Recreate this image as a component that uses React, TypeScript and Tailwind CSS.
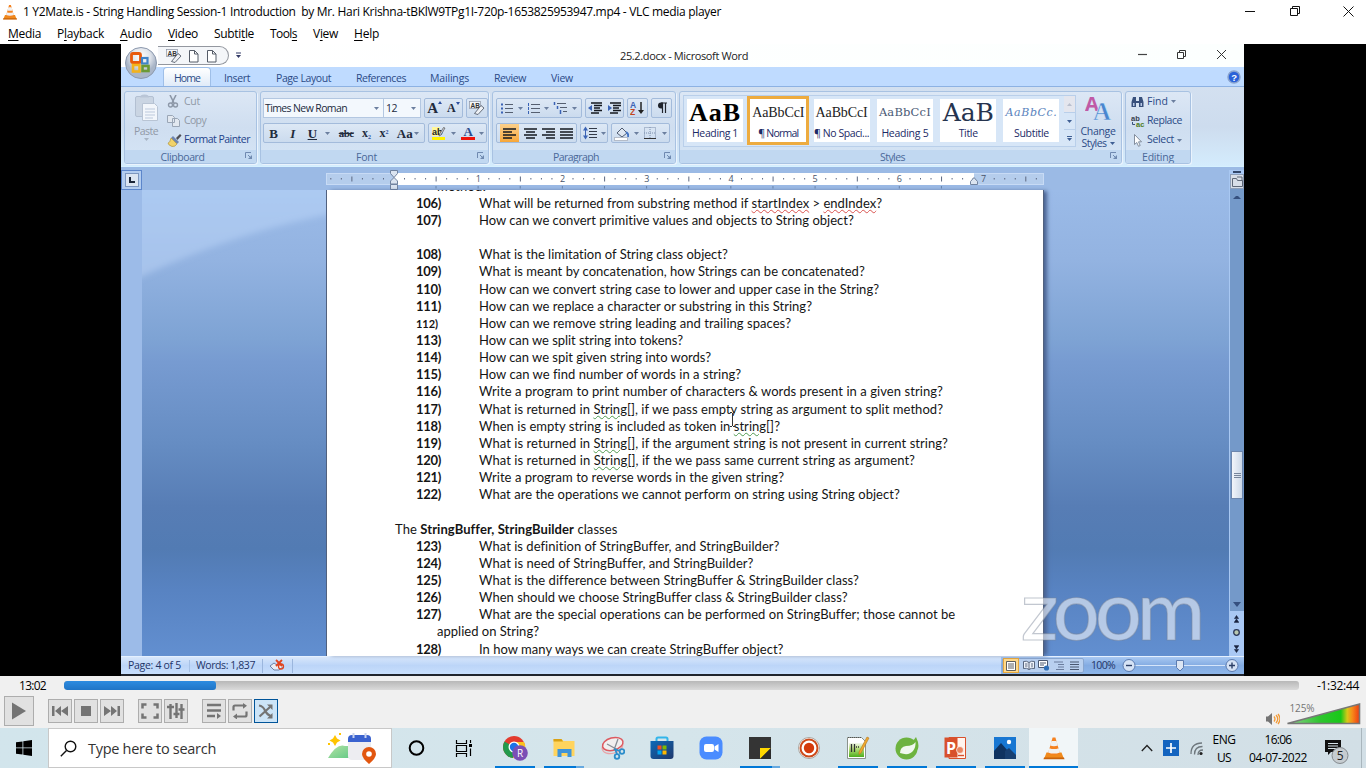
import { useLayoutEffect, useRef, useState, type ReactNode } from "react";

/* Text run spread over a known width by adjusting its letter spacing. */
function Fit({ w, className = "", children }: { w: number; className?: string; children: ReactNode }) {
  const ref = useRef<HTMLSpanElement>(null);
  const [ls, setLs] = useState(0);
  useLayoutEffect(() => {
    const el = ref.current;
    if (!el) return;
    const count = (el.textContent || "").length || 1;
    setLs((w - el.getBoundingClientRect().width) / count);
  }, [w]);
  return (
    <span ref={ref} className={`inline-block shrink-0 whitespace-pre ${className}`} style={{ letterSpacing: `${ls}px` }}>
      {children}
    </span>
  );
}

function Svg({ w, h, className = "", children }: { w: number; h: number; className?: string; children: ReactNode }) {
  return (
    <svg width={w} height={h} viewBox={`0 0 ${w} ${h}`} fill="none" className={`shrink-0 ${className}`}>
      {children}
    </svg>
  );
}

function Cone({ s }: { s: number }) {
  return (
    <svg width={s} height={s} viewBox="0 0 24 24" className="shrink-0">
      <path d="M4.500 16.500h15l2.500 6.500h-20z" fill="#f08a1c" />
      <path d="M2 21.500h20l.5 1.700h-21z" fill="#c9620a" />
      <path d="M10.600 1.500h2.800L18 17.500q-6 3-12 0z" fill="#f58220" />
      <path d="M9.500 5h5l1.400 4.600q-3.900 1.400-7.800 0zM7.300 12.200q4.700 1.800 9.400 0l1.200 4.200q-5.900 2.400-11.800 0z" fill="#f1f1f1" />
    </svg>
  );
}

/* ---------------- player chrome ---------------- */

const menus: [string, string, string, number, string][] = [
  ["", "M", "edia", 33, "mr-4"],
  ["P", "l", "ayback", 47, "mr-4"],
  ["", "A", "udio", 32, "mr-4"],
  ["", "V", "ideo", 30, "mr-4"],
  ["Subti", "t", "le", 40, "mr-4"],
  ["Tool", "s", "", 27, "mr-4"],
  ["V", "i", "ew", 25, "mr-4"],
  ["", "H", "elp", 25, ""],
];

function TitleBar() {
  return (
    <div className="flex h-6 items-center bg-white pl-0.5 text-black">
      <Cone s={16} />
      <Fit w={698} className="ml-[5px] text-[12px] leading-6">
        {"1 Y2Mate.is - String Handling Session-1 Introduction  by Mr. Hari Krishna-tBKlW9TPg1I-720p-1653825953947.mp4 - VLC media player"}
      </Fit>
      <Svg w={121} h={22} className="-mt-[3px] ml-auto">
        <path d="M0 11.500h10M98.500 6.500l10 10M108.500 6.500l-10 10" stroke="#111" />
        <path d="M45.500 8.500h7v7h-7zM47.500 8.500v-2h7v7h-2" stroke="#111" />
      </Svg>
    </div>
  );
}

function MenuBar() {
  return (
    <div className="flex h-5 items-center bg-white pl-2 text-[12px] text-black">
      {menus.map(([a, u, b, w, m]) => (
        <Fit key={a + u + b} w={w} className={`${m} leading-5`}>
          {a}
          <span className="underline underline-offset-2">{u}</span>
          {b}
        </Fit>
      ))}
    </div>
  );
}

const ctl = "flex size-6 items-center justify-center border border-[#adadad] bg-[#e1e1e1]";

function Controls() {
  return (
    <div className="flex h-[52px] flex-col bg-[#f0f0f0] text-black">
      <div className="flex h-[19px] items-center">
        <Fit w={27} className="ml-[19px] text-[12px] leading-[19px]">13:02</Fit>
        <div className="ml-[18px] h-[9px] w-[1235px] overflow-hidden rounded-[3px] bg-linear-to-b from-[#b8b8b8] to-[#dadada]">
          <div className="h-full w-[152px] rounded-[3px] bg-linear-to-b from-[#2d8be0] to-[#2075c6]" />
        </div>
        <Fit w={42} className="ml-[18px] text-[12px] leading-[19px]">-1:32:44</Fit>
      </div>
      <div className="flex h-[33px] items-center pb-px pl-1">
        <div className="flex size-[30px] items-center justify-center border border-[#adadad] bg-[#e1e1e1]">
          <Svg w={16} h={18}><path d="M1 .5l14 8.500-14 8.500z" fill="#747474" /></Svg>
        </div>
        <div className="ml-3.5 flex gap-0.5">
          <div className={ctl}><Svg w={16} h={12}><path d="M0 1h2.500v10H0zM9 1v10L3 6zM16 1v10l-7-5z" fill="#747474" /></Svg></div>
          <div className={ctl}><div className="size-2.5 bg-[#747474]" /></div>
          <div className={ctl}><Svg w={16} h={12}><path d="M13.500 1H16v10h-2.500zM7 1v10l6-5zM0 1v10l7-5z" fill="#747474" /></Svg></div>
        </div>
        <div className="ml-3.5 flex gap-0.5">
          <div className={ctl}><Svg w={18} h={16}><path d="M1.500 5.500v-4h4M12.500 1.500h4v4M16.500 10.500v4h-4M5.500 14.500h-4v-4" stroke="#747474" strokeWidth="2.500" /></Svg></div>
          <div className={ctl}><Svg w={18} h={16}><path d="M3.500 1v15M9.500 0v15M14.500 1v15" stroke="#747474" strokeWidth="2.400" /><path d="M0 4h7M6.500 11h6M11.500 6.500h6" stroke="#747474" strokeWidth="2.400" /></Svg></div>
        </div>
        <div className="ml-3.5 flex gap-0.5">
          <div className={ctl}><Svg w={16} h={16}><path d="M1 2h14M1 7.500h14M1 13h8" stroke="#747474" strokeWidth="2.400" /><path d="M11 10v6l4-3z" fill="#747474" /></Svg></div>
          <div className={ctl}><Svg w={16} h={16}><path d="M1.500 7.500V4q0-1.500 1.500-1.500h9M14.500 8.500V12q0 1.500-1.500 1.500H4" stroke="#747474" strokeWidth="2.200" /><path d="M11 0l4 2.700-4 3zM5 10.500v6l-4-3z" fill="#747474" /></Svg></div>
          <div className="flex size-6 items-center justify-center border border-[#005499] bg-[#cce4f7]">
            <Svg w={16} h={16}><path d="M1 2.500q4 .5 6 5t7 6M1.500 13.500L12 4" stroke="#747474" strokeWidth="2.200" /><path d="M9 1.500h5.500V7zM14.500 10v5.500H9z" fill="#747474" /></Svg>
          </div>
        </div>
        <Svg w={14} h={14} className="mt-4 mr-[6px] ml-auto"><path d="M0 4.500h2L6 1v12L2 9.500H0z" fill="#747474" /><path d="M8 4.500q2 2.500 0 5M10 3q3.500 4 0 8M12 2q4 5 0 10" stroke="#f39a35" strokeWidth="1.300" /></Svg>
        <svg width="75" height="26" viewBox="0 0 75 26" className="mr-[5px] mt-1 shrink-0">
          <defs>
            <linearGradient id="vol"><stop offset="0" stopColor="#8fd08f" /><stop offset=".45" stopColor="#2fc52f" /><stop offset=".74" stopColor="#18c818" /><stop offset=".83" stopColor="#d8c818" /><stop offset=".9" stopColor="#f68a1a" /><stop offset="1" stopColor="#ee3a12" /></linearGradient>
          </defs>
          <path d="M1.500 23.500L73.500 4v19.500z" fill="url(#vol)" stroke="#777" strokeWidth="1.600" />
          <text x="3.500" y="12" fontSize="10" textLength="25" fill="#747474" fontFamily="Open Sans, sans-serif">125%</text>
        </svg>
      </div>
    </div>
  );
}

/* ---------------- word ribbon ---------------- */

const tabs: [string, number, number][] = [
  ["Insert", 26, 225], ["Page Layout", 55, 277], ["References", 50, 357], ["Mailings", 39, 431], ["Review", 32, 495], ["View", 22, 552],
];

function Logo() {
  return (
    <Svg w={34} h={34}>
      <defs>
        <radialGradient id="orb" cx=".5" cy=".3"><stop offset="0" stopColor="#fff" /><stop offset=".6" stopColor="#dfe3ea" /><stop offset="1" stopColor="#aab6c8" /></radialGradient>
      </defs>
      <circle cx="17" cy="17" r="15.500" fill="url(#orb)" stroke="#8c99ae" />
      <rect x="7.500" y="7.500" width="9" height="9" rx="1.500" stroke="#e8590c" strokeWidth="2.800" />
      <rect x="18" y="12" width="5.500" height="5.500" stroke="#3f83c9" strokeWidth="2.200" />
      <rect x="9" y="19" width="6.500" height="6.500" stroke="#f3b21b" strokeWidth="2.600" />
      <rect x="18.500" y="20" width="6" height="5" stroke="#6b9a35" strokeWidth="2.600" />
    </Svg>
  );
}

function ClearIcon() {
  return (
    <Svg w={16} h={16}>
      <rect x=".5" y="1.500" width="11" height="7" fill="#f4f6f9" stroke="#8a93a3" strokeWidth=".7" />
      <text x="1.500" y="8" fontSize="6.500" fontWeight="700" fill="#333" fontFamily="Liberation Sans, sans-serif">AB</text>
      <path d="M12 5.500l3 2.500-6 6.500-3.500-1z" fill="#eef1f5" stroke="#59616e" strokeWidth=".9" />
    </Svg>
  );
}

function DocIcon() {
  return <Svg w={13} h={14}><path d="M2.500 1.500h5l3.500 3.500v8h-8.500z" fill="#fff" stroke="#555c68" /><path d="M7.500 1.500V5H11" stroke="#555c68" /></Svg>;
}

function WordTop() {
  return (
    <div className="relative h-[43px] shrink-0">
      <div className="flex h-[23px] items-center bg-linear-to-r from-white to-[#fcfffe]">
        <div className="ml-[37px] flex h-[19px] w-[71px] items-center gap-[5px] rounded-r-full border border-l-0 border-[#93979f] bg-[#f4f6f9] pl-2">
          <ClearIcon />
          <DocIcon />
          <DocIcon />
        </div>
        <Svg w={7} h={7} className="ml-[6px]"><path d="M1 1h5" stroke="#333a66" /><path d="M1 3h5L3.500 6z" fill="#333a66" /></Svg>
        <Fit w={128} className="ml-[378px] pt-0.5 text-[11px] text-[#222]">25.2.docx - Microsoft Word</Fit>
        <Svg w={98} h={14} className="-mt-[3px] mr-[18px] ml-auto">
          <path d="M10 7.500h9" stroke="#444" strokeWidth="1.200" />
          <path d="M49.500 5.500h6v6h-6zM51.500 5.500v-2h6v6h-2M89 3l9 9M98 3l-9 9" stroke="#333" />
        </Svg>
      </div>
      <div className="relative flex h-5 items-end border-b border-[#8db2e3] bg-[#bfdbff] text-[10.5px] text-[#2b4a86]">
        <div className="ml-[42px] flex h-[19px] w-[48px] items-center justify-center rounded-t border border-b-0 border-[#9fbfe8] bg-linear-to-b from-white to-[#e0ebf8] pt-[3px]">
          <Fit w={26}>Home</Fit>
        </div>
        {tabs.map(([t, w, x]) => (
          <div key={t} className="absolute top-[4px]" style={{ left: x - 122 }}>
            <Fit w={w}>{t}</Fit>
          </div>
        ))}
        <Svg w={14} h={14} className="mr-[3px] mb-[2px] ml-auto">
          <circle cx="7" cy="7" r="6" fill="#2b62d9" stroke="#8aa4cf" strokeWidth="1.500" />
          <text x="4.200" y="10.500" fontSize="9.500" fontWeight="700" fill="#fff" fontFamily="Liberation Sans, sans-serif">?</text>
        </Svg>
      </div>
      <div className="absolute top-[2px] left-[3px]"><Logo /></div>
    </div>
  );
}

function Group({ label, w, className, corner = true, children }: { label: string; w: number; className: string; corner?: boolean; children: ReactNode }) {
  return (
    <div className={`flex h-[73px] shrink-0 flex-col overflow-hidden rounded-[3px] border border-[#a8c2e2] bg-linear-to-b from-[#dce7f5] via-[#cfdef0] to-[#d5e5f6] shadow-[1px_1px_0_#eaf3fd] ${className}`}>
      <div className="h-[58px] shrink-0">{children}</div>
      <div className={`relative flex h-[13px] items-center justify-center bg-[#c1d8f1] pt-px text-[10.5px] leading-[13px] text-[#4a6899] ${corner ? "pr-[16px]" : ""}`}>
        <Fit w={w}>{label}</Fit>
        {corner && (
          <Svg w={8} h={8} className="absolute top-0.5 right-[3px]"><path d="M.5 6V.5H6M3 3l3 3" stroke="#6f89b0" /><path d="M7 3v4H3z" fill="#6f89b0" /></Svg>
        )}
      </div>
    </div>
  );
}

function Down({ c = "#6b7f9f" }: { c?: string }) {
  return <Svg w={5} h={3}><path d="M0 0h5L2.500 3z" fill={c} /></Svg>;
}

const box = "flex h-[20px] items-center justify-around rounded-[2px] border border-[#a3bbdb] bg-linear-to-b from-[#dde8f5] to-[#cbdbee]";

function Clipboard() {
  return (
    <Group label="Clipboard" w={44} className="ml-[3px] w-[133px]">
      <div className="flex text-[10.5px] text-[#9099a6]">
        <div className="flex w-[42px] flex-col items-center pt-px leading-[13px]">
          <Svg w={27} h={28}>
            <rect x="2.500" y="3.500" width="18" height="20" rx="1.500" fill="#cad5e3" stroke="#b3c0d2" />
            <path d="M7 4.500q0-3 4.500-3t4.500 3z" fill="#b9c5d6" />
            <path d="M9.500 10.500h12l3 3v14h-15z" fill="#f2f6fb" stroke="#b8c4d4" />
            <path d="M12 16h10M12 19h10M12 22h10M12 25h8" stroke="#bcc9dc" />
          </Svg>
          <Fit w={24} className="mt-1">Paste</Fit>
          <Down c="#a8b4c4" />
        </div>
        <div className="flex flex-col">
          <div className="flex h-[19px] items-center gap-[4px]">
            <Svg w={13} h={13}><path d="M3 0l4 8M9 0L5 8" stroke="#8d98a8" strokeWidth="1.600" /><circle cx="3.500" cy="10" r="2" stroke="#8d98a8" strokeWidth="1.400" /><circle cx="8.500" cy="10" r="2" stroke="#8d98a8" strokeWidth="1.400" /></Svg>
            <Fit w={16}>Cut</Fit>
          </div>
          <div className="flex h-[19px] items-center gap-[4px]">
            <Svg w={13} h={12}><path d="M.5.5h5l2 2v5h-7zM5.500 3.500h5l2 2v6h-7z" fill="#e2e8f0" stroke="#9aa6b6" /></Svg>
            <Fit w={22}>Copy</Fit>
          </div>
          <div className="flex h-[19px] items-center gap-[2px] text-[#24428a]">
            <Svg w={15} h={14}><path d="M9 5l4-4 1.500 1.500-4 4.500z" fill="#4d4d55" /><path d="M6 3l6 6-2 2-6-6z" fill="#6f86b2" /><path d="M4 5l6 6q-2 3-5 2.500Q1 12 1 10q2 0 3-5z" fill="#f1d36b" stroke="#a88a30" strokeWidth=".6" /></Svg>
            <Fit w={66}>Format Painter</Fit>
          </div>
        </div>
      </div>
    </Group>
  );
}

function FontGroup() {
  return (
    <Group label="Font" w={21} className="ml-[3px] w-[229px]">
      <div className="flex flex-col gap-[5px] pt-[6px] pl-0.5 font-['Liberation_Serif',serif] text-[#222b3d]">
        <div className="flex">
          <div className="flex h-[20px] w-[121px] items-center justify-between border border-[#b3c7e1] bg-[#f3f8fd] pr-1 pl-px font-['Open_Sans',sans-serif] text-[10.5px]">
            <Fit w={82} className="pt-px">Times New Roman</Fit><Down />
          </div>
          <div className="flex h-[20px] w-[37px] items-center justify-between border border-l-0 border-[#b3c7e1] bg-[#f3f8fd] pr-1 pl-[2px] font-['Open_Sans',sans-serif] text-[10.5px]">
            <Fit w={11} className="pt-px">12</Fit><Down />
          </div>
          <div className={`${box} ml-[3px] w-[39px] font-bold`}>
            <span className="flex text-[15px] leading-none">A<Svg w={4} h={3}><path d="M0 3h4L2 0z" fill="#2b4fa0" /></Svg></span>
            <span className="flex text-[12px] leading-none">A<Svg w={4} h={3}><path d="M0 0h4L2 3z" fill="#2b4fa0" /></Svg></span>
          </div>
          <div className={`${box} ml-[3px] w-[22px]`}><ClearIcon /></div>
        </div>
        <div className="flex text-[13px] leading-none font-bold">
          <div className={`${box} w-[162px] px-px`}>
            <span>B</span>
            <span className="ml-1 italic">I</span>
            <span className="ml-1 underline">U</span>
            <Down />
            <Fit w={15} className="text-[11px] line-through">abc</Fit>
            <span className="text-[12px]">x<sub className="text-[6px] text-[#2b4fa0]">2</sub></span>
            <span className="text-[12px]">x<sup className="text-[6px] text-[#2b4fa0]">2</sup></span>
            <span className="flex items-center gap-px">Aa<Down /></span>
          </div>
          <div className={`${box} ml-[3px] w-[59px]`}>
            <Svg w={16} h={16}><rect x="1" y="12" width="13" height="3" fill="#fff200" /><rect x="1" y="2" width="8" height="9" fill="#fff79a" /><text x="1" y="9.500" fontSize="9" fontWeight="700" fill="#222" fontFamily="Liberation Sans, sans-serif">ab</text><path d="M14 3l-4 7-2 1 .5-2 4-6.500z" fill="#c9ccd4" stroke="#444" strokeWidth=".6" /></Svg>
            <Down />
            <Svg w={14} h={16}><rect x="0" y="12" width="14" height="3" fill="#f0140a" /><text x="2.500" y="11" fontSize="13" fontWeight="700" fill="#2c4c8c" fontFamily="Liberation Serif, serif">A</text></Svg>
            <Down />
          </div>
        </div>
      </div>
    </Group>
  );
}

function Lines({ d, c = "#15181f" }: { d: string; c?: string }) {
  return <Svg w={13} h={11}><path d={d} stroke={c} strokeWidth="1.400" /></Svg>;
}

function Paragraph() {
  return (
    <Group label="Paragraph" w={46} className="ml-[3px] w-[184px]">
      <div className="flex flex-col gap-[5px] pt-[6px] pl-[3px]">
        <div className="flex">
          <div className={`${box} w-[86px] gap-[2px] px-[3px]`}>
            <Svg w={13} h={11}><path d="M4 1.500h8M4 5.500h8M4 9.500h8" stroke="#555f70" /><path d="M0 1.500h2M0 5.500h2M0 9.500h2" stroke="#3a63b5" strokeWidth="2" /></Svg>
            <Down />
            <Svg w={13} h={11}><path d="M4 1.500h9M4 5.500h9M4 9.500h9" stroke="#555f70" /><path d="M1.500 0v3M1.500 4v3M1.500 8v3" stroke="#3a63b5" /></Svg>
            <Down />
            <Svg w={15} h={13}><path d="M4 1.500h9M7 5.500h7M10 9.500h4" stroke="#555f70" /><path d="M1.500 0v3M4.500 4v3M7.500 8v4" stroke="#3a63b5" strokeWidth="1.500" /></Svg>
            <Down />
          </div>
          <div className={`${box} ml-[3px] w-[39px]`}>
            <Svg w={14} h={12}><path d="M3 1h11M6 3.500h8M6 6h6M6 8.500h8M3 11h8" stroke="#15181f" strokeWidth="1.300" /><path d="M4 3L0 6l4 3z" fill="#3a63b5" /></Svg>
            <Svg w={14} h={12}><path d="M3 1h11M6 3.500h8M6 6h6M6 8.500h8M3 11h8" stroke="#15181f" strokeWidth="1.300" /><path d="M1 3l4 3-4 3z" fill="#3a63b5" /></Svg>
          </div>
          <div className={`${box} ml-[3px] w-[21px]`}>
            <Svg w={15} h={16}><text x="0" y="7.500" fontSize="8.500" fontWeight="700" fill="#3a63b5" fontFamily="Liberation Sans, sans-serif">A</text><text x="0" y="15" fontSize="8.500" fontWeight="700" fill="#c1441e" fontFamily="Liberation Sans, sans-serif">Z</text><path d="M11 2v10" stroke="#222" strokeWidth="1.500" /><path d="M8 10h6l-3 4z" fill="#222" /></Svg>
          </div>
          <div className={`${box} ml-[3px] w-[21px]`}>
            <Svg w={10} h={12}><path d="M4 1h6M5.500 1v10M8.500 1v10" stroke="#20242c" strokeWidth="1.200" /><path d="M6 .5H4a3 3 0 000 6h2z" fill="#20242c" /></Svg>
          </div>
        </div>
        <div className="flex">
          <div className={`${box} w-[81px] overflow-hidden`}>
            <div className="flex h-full w-[19px] items-center justify-center bg-linear-to-b from-[#fbd08a] to-[#f7a738]"><Lines d="M0 1h13M0 4h9M0 7h13M0 10h9" /></div>
            <Lines d="M0 1h13M2 4h9M0 7h13M2 10h9" />
            <Lines d="M0 1h13M4 4h9M0 7h13M4 10h9" />
            <Lines d="M0 1h13M0 4h13M0 7h13M0 10h13" />
          </div>
          <div className={`${box} ml-[3px] w-[28px]`}>
            <Svg w={15} h={14}><path d="M6 2.500h8M6 5.500h8M6 8.500h8M6 11.500h8" stroke="#333a48" strokeWidth="1.200" /><path d="M2.500 2v10" stroke="#3a63b5" /><path d="M0 4.500L2.500.5 5 4.500zM0 9.500l2.500 4 2.500-4z" fill="#3a63b5" /></Svg>
            <Down />
          </div>
          <div className={`${box} ml-[3px] w-[59px]`}>
            <Svg w={15} h={15}><path d="M3 7l5-5 5 5-5 4z" fill="#dfe7f2" stroke="#4f5b70" /><path d="M12 6q3 2 2 5" stroke="#4474c4" strokeWidth="2" /><rect x=".5" y="11.500" width="13" height="3" fill="#fff" stroke="#b5bcc8" /></Svg>
            <Down />
            <Svg w={13} h={13}><path d="M.5.5h11v11H.5zM6 0v12M0 6h12" stroke="#7d8fad" strokeDasharray="1 1" /><path d="M0 11.500h12" stroke="#333" /></Svg>
            <Down />
          </div>
        </div>
      </div>
    </Group>
  );
}

const serif = "font-['Liberation_Serif','DejaVu_Serif',serif]";
const cards: { s: string; w: number; l: string; lw: number; cls: string; card: string }[] = [
  { s: "AaB", w: 52, l: "Heading 1", lw: 46, cls: `${serif} text-[26px] font-bold text-black`, card: "w-[56px]" },
  { s: "AaBbCcI", w: 52, l: "¶ Normal", lw: 40, cls: `${serif} text-[14px] text-[#222]`, card: "w-[56px] outline-[3px] outline-[#edab3f]" },
  { s: "AaBbCcI", w: 52, l: "¶ No Spaci...", lw: 55, cls: `${serif} text-[14px] text-[#222]`, card: "w-[56px]" },
  { s: "AaBbCcI", w: 52, l: "Heading 5", lw: 47, cls: "font-['DejaVu_Serif',serif] text-[11.5px] text-[#4a5a75]", card: "w-[56px]" },
  { s: "AaB", w: 51, l: "Title", lw: 19, cls: "font-['DejaVu_Serif',serif] text-[25px] text-[#26344e]", card: "w-[56px]" },
  { s: "AaBbCc.", w: 52, l: "Subtitle", lw: 35, cls: "font-['DejaVu_Serif',serif] text-[11px] italic text-[#5a83bd]", card: "w-[56px]" },
];

function Styles() {
  return (
    <Group label="Styles" w={25} className="ml-[3px] w-[443px]">
      <div className="flex">
        <div className="mt-[3px] ml-[3px] flex h-[52px] w-[393px] border border-[#b9cfea] bg-[#d7e6f7] pt-[3px] pl-[3px]">
          <div className="flex gap-[7.3px]">
            {cards.map((c, i) => (
              <div key={i} className={`flex h-[43px] flex-col items-center bg-white ${c.card}`}>
                <div className="flex h-[27px] items-center justify-center leading-none"><Fit w={c.w} className={`${c.cls} leading-none`}>{c.s}</Fit></div>
                <Fit w={c.lw} className="text-[10.5px] leading-[15px] text-[#1b2a66]">{c.l}</Fit>
              </div>
            ))}
          </div>
          <div className="-mt-[3px] ml-[5px] flex w-3 flex-col text-[#5c7699]">
            <div className="flex h-[17px] items-center justify-center border-b border-[#b9cfea] bg-[#e4e6ee]"><Svg w={5} h={3}><path d="M0 3h5L2.500 0z" fill="#b9bfce" /></Svg></div>
            <div className="flex h-[17px] items-center justify-center border-b border-[#b9cfea]"><Down c="#3f5f94" /></div>
            <div className="flex h-[16px] flex-col items-center justify-center gap-px"><div className="h-px w-[5px] bg-[#3f5f94]" /><Down c="#3f5f94" /></div>
          </div>
        </div>
        <div className="ml-[3px] flex w-[38px] flex-col items-center pt-px text-[10.5px] leading-[11.5px] text-[#2b4a86]">
          <Svg w={27} h={29}>
            <text x="0" y="18" fontSize="20" fontWeight="700" fill="#c05aa6" fontFamily="Open Sans, sans-serif">A</text>
            <text x="8" y="27" fontSize="25" fontWeight="700" fill="#4a86cf" stroke="#dce9f8" strokeWidth=".5" fontFamily="Liberation Serif, serif">A</text>
          </Svg>
          <Fit w={35} className="mt-[4px]">Change</Fit>
          <span className="flex items-center gap-[3px]"><Fit w={25}>Styles</Fit><Down c="#3f5f94" /></span>
        </div>
      </div>
    </Group>
  );
}

function Editing() {
  const row = "flex items-center gap-[3px]";
  return (
    <Group label="Editing" w={32} corner={false} className="ml-[3px] w-[66px]">
      <div className="flex flex-col pl-[5px] text-[10.5px] text-[#2b4a86]">
        <div className={`${row} h-[19px]`}>
          <Svg w={13} h={12}><path d="M2 1h3v4h3V1h3l1.500 5v5H8V7H5v4H.5V6z" fill="#38507c" /><path d="M2 7h1.500v3H2zM9.500 7H11v3H9.500z" fill="#b8c9e6" /></Svg>
          <Fit w={21}>Find</Fit><Down />
        </div>
        <div className={`${row} h-[19px]`}>
          <Svg w={14} h={14}><text x="0" y="7" fontSize="7.500" fontWeight="700" fill="#38414f" fontFamily="Liberation Sans, sans-serif">ab</text><text x="5" y="13" fontSize="7.500" fontWeight="700" fill="#4d7b22" fontFamily="Liberation Sans, sans-serif">ac</text><path d="M1.500 8v2.500H4" stroke="#38507c" /></Svg>
          <Fit w={35} className="-ml-px">Replace</Fit>
        </div>
        <div className={`${row} h-[20px]`}>
          <Svg w={13} h={13}><path d="M3.500.500v10l2.300-2 1.700 3.800 1.700-.8-1.700-3.700h3z" fill="#fff" stroke="#6b7688" strokeWidth=".8" /></Svg>
          <Fit w={27}>Select</Fit><Down />
        </div>
      </div>
    </Group>
  );
}

/* ---------------- ruler and document ---------------- */

function Ruler() {
  const eighths = Array.from({ length: 68 }, (_, i) => i - 6).filter((i) => i <= 61);
  return (
    <svg width="718" height="20" viewBox="326 170 718 20" className="ml-[184px] shrink-0">
      <rect x="326.500" y="173.500" width="717" height="11" fill="#b5cdec" stroke="#c8dbf5" />
      <rect x="394" y="173" width="580" height="12" fill="#fff" />
      {eighths.map((i) => {
        const x = 394 + i * 10.53;
        if (i === 0) return null;
        if (i % 8 === 0)
          return <text key={i} x={x} y="182" fontSize="9" textAnchor="middle" fill="#48546a" fontFamily="Open Sans, sans-serif">{i / 8}</text>;
        return i % 4 === 0 ? <path key={i} d={`M${x} 176.500v5`} stroke="#5c6780" /> : <path key={i} d={`M${x} 178v1.500`} stroke="#5c6780" />;
      })}
      {Array.from({ length: 13 }, (_, i) => <path key={i} d={`M${436 + i * 42.12} 186v2.500`} stroke="#6984ac" />)}
      <path d="M390.500 170.500h7v3l-3.500 4-3.500-4zM390.500 184v-3l3.500-3.500 3.500 3.500v3zM390.500 184.500h7v5h-7z" fill="#dbe4f0" stroke="#71839f" />
      <path d="M970.500 184.500v-3l3.500-4 3.500 4v3z" fill="#dbe4f0" stroke="#71839f" />
    </svg>
  );
}

const gram = "underline decoration-[#4f9a4f] decoration-wavy decoration-[0.7px] underline-offset-[1px]";
const spell = "underline decoration-[#d9534f] decoration-wavy decoration-[0.7px] underline-offset-[1px]";

type Line = { n?: string; t: ReactNode; w: number; left?: number; small?: boolean };
const arr = <span className={gram}>String[]</span>;
const lines: Line[] = [
  { t: "method.", w: 49, left: 110 },
  { n: "106)", t: <>What will be returned from substring method if <span className={spell}>startIndex</span> &gt; <span className={spell}>endIndex</span>?</>, w: 403 },
  { n: "107)", t: "How can we convert primitive values and objects to String object?", w: 375 },
  { t: "", w: 0 },
  { n: "108)", t: "What is the limitation of String class object?", w: 249 },
  { n: "109)", t: "What is meant by concatenation, how Strings can be concatenated?", w: 386 },
  { n: "110)", t: "How can we convert string case to lower and upper case in the String?", w: 400 },
  { n: "111)", t: "How can we replace a character or substring in this String?", w: 333 },
  { n: "112)", t: "How can we remove string leading and trailing spaces?", w: 312, small: true },
  { n: "113)", t: "How can we split string into tokens?", w: 204 },
  { n: "114)", t: "How can we spit given string into words?", w: 232 },
  { n: "115)", t: "How can we find number of words in a string?", w: 262 },
  { n: "116)", t: "Write a program to print number of characters & words present in a given string?", w: 464 },
  { n: "117)", t: <>What is returned in {arr}, if we pass empty string as argument to split method?</>, w: 464 },
  { n: "118)", t: <>When is empty string is included as token in <span className={gram}>string[]</span>?</>, w: 301 },
  { n: "119)", t: <>What is returned in {arr}, if the argument string is not present in current string?</>, w: 469 },
  { n: "120)", t: <>What is returned in {arr}, if the we pass same current string as argument?</>, w: 436 },
  { n: "121)", t: "Write a program to reverse words in the given string?", w: 305 },
  { n: "122)", t: "What are the operations we cannot perform on string using String object?", w: 421 },
  { t: "", w: 0 },
  { t: <>The <b>StringBuffer, StringBuilder</b> classes</>, w: 222, left: 68 },
  { n: "123)", t: "What is definition of StringBuffer, and StringBuilder?", w: 300 },
  { n: "124)", t: "What is need of StringBuffer, and StringBuilder?", w: 274 },
  { n: "125)", t: "What is the difference between StringBuffer & StringBuilder class?", w: 379 },
  { n: "126)", t: "When should we choose StringBuffer class & StringBuilder class?", w: 368 },
  { n: "127)", t: "What are the special operations can be performed on StringBuffer; those cannot be", w: 476 },
  { t: "applied on String?", w: 102, left: 110 },
  { n: "128)", t: "In how many ways we can create StringBuffer object?", w: 304 },
];

function Page() {
  return (
    <div className="relative h-[466px] w-[718px] shrink-0 overflow-hidden border-r border-l border-[#51617e] bg-white font-['Lato',sans-serif] text-[13px] text-[#151515] shadow-[4px_0_4px_-1px_#4a6290]">
      <div className="-mt-[12.3px] flex flex-col">
        {lines.map((l, i) => (
          <div key={i} className="flex h-[17.15px] items-center leading-[17px]" style={{ paddingLeft: l.n ? 89 : (l.left ?? 0) }}>
            {l.n && (
              <div className="w-[63px] shrink-0">
                {l.small ? <Fit w={22} className="text-[11px] font-bold">{l.n}</Fit> : <Fit w={25} className="font-bold">{l.n}</Fit>}
              </div>
            )}
            {l.w > 0 && <Fit w={l.w}>{l.t}</Fit>}
          </div>
        ))}
      </div>
      <Svg w={7} h={16} className="absolute top-[222px] left-[402px]"><path d="M1 .5h2M4 .5h2M3.500 1v13M1 14.500h2M4 14.500h2" stroke="#333" /></Svg>
    </div>
  );
}

function VScroll() {
  return (
    <div className="ml-auto flex h-[486px] w-[15px] shrink-0 flex-col border-l border-[#a9c8f2] bg-[#a9c8f4]">
      <div className="mx-auto mt-px h-[2px] w-2 bg-[#33476b]" />
      <div className="mt-px flex h-[15px] items-center justify-center border border-[#8f9fb8] bg-[#d8dee8]">
        <Svg w={11} h={11}><path d="M.5 2.500h4l1 2h5v6H.5zM5 1h5v4" stroke="#5f6878" /></Svg>
      </div>
      <div className="flex h-[422px] flex-col items-center bg-[#7499c9]">
        <Svg w={8} h={3} className="mt-[7px]"><path d="M0 3h8L5 0H3z" fill="#35507f" /></Svg>
        <div className="mt-[252px] flex h-[48px] w-[12px] flex-col items-center justify-center gap-px border border-[#6c86ad] bg-linear-to-r from-[#f2f5fa] to-[#ccd8e8]">
          <div className="h-px w-[7px] bg-[#77859b]" /><div className="h-px w-[7px] bg-[#77859b]" /><div className="h-px w-[7px] bg-[#77859b]" />
        </div>
        <Svg w={8} h={5} className="mt-auto mb-1"><path d="M0 0h8L4 5z" fill="#35507f" /></Svg>
      </div>
      <Svg w={14} h={45}>
        <path d="M4.500 7.500h4L6.500 4.500zM4.500 11h4L6.500 8zM4 11.500h5M4.500 35h4l-2 3zM4.500 38.500h4l-2 3zM4 34.500h5" fill="#1a2440" stroke="#1a2440" strokeWidth=".6" />
        <circle cx="6.500" cy="21.500" r="2.800" fill="#b8c7b0" stroke="#2a3658" strokeWidth="1.300" />
      </Svg>
    </div>
  );
}

function StatusBar() {
  return (
    <div className="flex h-[18px] shrink-0 items-center border-t border-[#e4f0ff] bg-linear-to-b from-[#d8e7fb] via-[#bcd5f8] to-[#c8dffc] text-[10.5px] text-[#1f3568]">
      <Fit w={53} className="ml-[7px]">Page: 4 of 5</Fit>
      <div className="ml-2 h-3 w-px bg-[#a6c1e6]" />
      <Fit w={59} className="ml-[6px]">Words: 1,837</Fit>
      <div className="ml-[7px] h-3.5 w-px bg-[#9bb6dd]" />
      <Svg w={15} h={13} className="ml-[7px]"><path d="M0 7l4-3 3 2 3-2 4 3-5 4H4z" fill="#e9edf5" stroke="#6f82a5" /><path d="M6 1l6 6M12 1L6 7" stroke="#e2431e" strokeWidth="1.800" /><circle cx="11" cy="7.500" r="2.500" stroke="#e2431e" strokeWidth="1.300" /></Svg>
      <div className="ml-[7px] h-3.5 w-px bg-[#9bb6dd]" />
      <div className="ml-auto flex h-full w-[243px] items-center bg-linear-to-b from-[#a8c8f2] via-[#83abe2] to-[#8db6ea]">
        <div className="ml-px flex h-[15px] items-center gap-[3.5px] rounded-[2px] border border-[#89a6cf] bg-[#b9d0ef] pr-[3px]">
          <div className="flex h-[15px] w-[16px] items-center justify-center border border-[#e4a63e] bg-[#ffd98a]"><Svg w={10} h={10}><path d="M.5.500h9v9h-9zM2 3h6M2 5h6M2 7h6" fill="#fff" stroke="#4f4f4f" strokeWidth=".9" /></Svg></div>
          <Svg w={12} h={11}><path d="M.5 1.500q3-1 5.500 1 2.500-2 5.500-1v7q-3-1-5.500 1-2.500-2-5.500-1zM6 2.500v7M2 4h2.500M8 4h2M2 6h2.500M8 6h2" fill="#eef3fa" stroke="#4a5870" strokeWidth=".9" /></Svg>
          <Svg w={12} h={11}><path d="M.5.500h9v7h-9zM2 3h6M2 5h4" fill="#fff" stroke="#4a5870" /><circle cx="8.500" cy="8" r="2.600" fill="#2f6fb8" /></Svg>
          <Svg w={12} h={10}><path d="M0 1h9M4 3.500h6M4 6h6M2 8.500h8" stroke="#6b7d9d" /></Svg>
          <Svg w={11} h={10}><path d="M1 1h9M1 3.500h9M1 6h9M1 8.500h9" stroke="#4a5870" strokeWidth="1.200" /></Svg>
        </div>
        <Fit w={24} className="ml-[7px]">100%</Fit>
        <Svg w={120} h={15} className="ml-[6px]">
          <path d="M14 7.500h90" stroke="#d5e5fa" />
          <circle cx="8" cy="7.500" r="6" fill="#d5e2f5" stroke="#5b7bb0" /><path d="M5 7.500h6" stroke="#2c3f66" strokeWidth="1.400" />
          <path d="M55.500 2.500h7v7l-3.500 3.500-3.500-3.500z" fill="#dbe5f3" stroke="#5b7bb0" />
          <circle cx="111" cy="7.500" r="6" fill="#d5e2f5" stroke="#5b7bb0" /><path d="M108 7.500h6M111 4.500v6" stroke="#2c3f66" strokeWidth="1.400" />
        </Svg>
      </div>
    </div>
  );
}

function Word() {
  return (
    <div className="relative flex h-[632px] w-[1123px] shrink-0 flex-col bg-[#20242c]">
      <WordTop />
      <div className="flex h-[80px] shrink-0 items-start border-b border-[#d6f1ff] bg-linear-to-b from-[#d3e0f0] via-[#cddcee] to-[#d4ecfd] pt-1">
        <Clipboard />
        <FontGroup />
        <Paragraph />
        <Styles />
        <Editing />
      </div>
      <div className="flex h-[489px] shrink-0 items-start bg-[#9bbae5] pt-[3px]">
        <div className="flex h-[486px] w-[1108px] shrink-0 flex-col">
          <div className="flex h-5 items-start">
            <div className="flex h-5 w-[21px] shrink-0 items-center justify-center border border-[#5c86cb] bg-[#b3cdf0]">
              <div className="flex size-[14px] items-center justify-center border border-[#7d97bf] bg-[#dbe5f2]"><Svg w={6} h={6}><path d="M1 0v5h5" stroke="#1c2638" strokeWidth="2" /></Svg></div>
            </div>
            <Ruler />
          </div>
          <div className="flex h-[466px] w-[1108px]">
            <div className="h-full w-[21px] bg-[#9cbbe8]" />
            <div className="relative flex h-full w-[1087px] bg-[linear-gradient(180deg,#9bbbe8_0%,#93b3e1_15%,#7ea3d4_32%,#779bd1_37%,#668dc3_54%,#577db5_68%,#527bb3_77%,#5883c2_86%,#628fd0_100%)]">
              <svg width="185" height="120" viewBox="0 0 185 120" className="absolute top-0 left-0">
                <defs>
                  <linearGradient id="sheen" x1="0" y1="0" x2="0" y2="1"><stop offset="0" stopColor="#adcbf3" /><stop offset="1" stopColor="#a6c2ea" /></linearGradient>
                  <filter id="soft" x="-10%" y="-10%" width="120%" height="130%"><feGaussianBlur stdDeviation="3" /></filter>
                </defs>
                <path d="M-12 -12h210v34Q90 42-12 92z" fill="url(#sheen)" filter="url(#soft)" />
              </svg>
              <div className="ml-[184px] flex"><Page /></div>
            </div>
          </div>
        </div>
        <VScroll />
      </div>
      <StatusBar />
      <div className="absolute top-[519px] left-[900px] font-['Lato',sans-serif] text-[83px] leading-[90px] font-medium text-white/55 [-webkit-text-stroke:1.2px_rgba(120,130,150,0.45)]">
        <Fit w={179}>zoom</Fit>
      </div>
    </div>
  );
}

/* ---------------- taskbar ---------------- */

function TaskIcon({ bar, children, className = "" }: { bar?: "full" | "split" | "wide"; children: ReactNode; className?: string }) {
  return (
    <div className={`flex h-10 w-[49px] shrink-0 flex-col items-center ${className}`}>
      <div className="flex h-[38px] items-center justify-center pt-0.5">{children}</div>
      {bar === "full" && <div className="h-0.5 w-10 bg-[#0078d7]" />}
      {bar === "wide" && <div className="h-0.5 w-full bg-[#0078d7]" />}
      {bar === "split" && <div className="flex h-0.5 w-10 bg-[#66a9e0]"><div className="w-8 bg-[#0078d7]" /></div>}
    </div>
  );
}

function Taskbar() {
  return (
    <div className="flex h-10 bg-linear-to-r from-[#d2e5ec] via-[#d5e5eb] to-[#d2dfe6] text-black">
      <div className="flex w-12 items-center justify-center">
        <Svg w={16} h={16}><path d="M0 2.300L6.500 1.400v6.100H0zM7.300 1.300L16 0v7.500H7.300zM0 8.300h6.500v6.300L0 13.700zM7.300 8.300H16V16l-8.700-1.200z" fill="#000" /></Svg>
      </div>
      <div className="flex h-10 w-[344px] items-center border border-[#c8c8c8] bg-white">
        <Svg w={17} h={17} className="ml-[11px]"><circle cx="10.500" cy="6.500" r="5.300" stroke="#111" strokeWidth="1.400" /><path d="M6.500 10.500L.8 16.200" stroke="#111" strokeWidth="1.400" /></Svg>
        <Fit w={128} className="ml-[11px] pt-px text-[14.5px] text-[#333]">Type here to search</Fit>
        <Svg w={50} h={32} className="mr-3.5 ml-auto">
          <defs><linearGradient id="hill" x1="0" y1="0" x2="1" y2="1"><stop offset="0" stopColor="#b4e3a4" /><stop offset="1" stopColor="#63c986" /></linearGradient></defs>
          <path d="M8 3l2 3.500 3.500 2-3.500 2L8 14l-2-3.500-3.500-2 3.500-2z" fill="#ffc400" />
          <path d="M12 1h2v2h-2zM1 11h2v2H1z" fill="#ffc400" />
          <path d="M1 26q9-15 17-12l6 0v12z" fill="url(#hill)" />
          <rect x="21" y="4" width="23" height="24" rx="4" fill="#ededf1" />
          <path d="M21 10V7q0-4 4-4h15q4 0 4 4v3z" fill="#3a62cf" />
          <path d="M26.500 1v5M38.500 1v5" stroke="#c9d3ee" strokeWidth="2" />
          <path d="M42 15a7 7 0 017 7q0 4-7 10-7-6-7-10a7 7 0 017-7z" fill="#e2560f" /><circle cx="42" cy="22" r="2.800" fill="#fff" />
        </Svg>
      </div>
      <div className="flex">
        <TaskIcon><Svg w={18} h={18}><circle cx="8.500" cy="9" r="6.800" stroke="#000" strokeWidth="2" /></Svg></TaskIcon>
        <TaskIcon><Svg w={22} h={17}><path d="M1.500 0v3.500h10V0M1.500 17v-3.500h10V17M1.500 5.500h10v6h-10zM15.500 0v3M15.500 8.500V16" stroke="#000" strokeWidth="1.200" /><path d="M14 4h3v3h-3z" fill="#000" /></Svg></TaskIcon>
        <TaskIcon bar="full">
          <Svg w={26} h={26}>
            <circle cx="12" cy="12" r="11" fill="#e33b2e" />
            <path d="M12 12L2.500 6.500A11 11 0 0011 23z" fill="#229a4c" />
            <path d="M12 12l-1 11A11 11 0 0022 7H12z" fill="#fcc21c" />
            <circle cx="12" cy="12" r="5.500" fill="#fff" /><circle cx="12" cy="12" r="4.200" fill="#1d72e8" />
            <circle cx="18" cy="18" r="7.800" fill="#7b4fb5" />
            <text x="15" y="22" fontSize="10" fill="#fff" fontFamily="Open Sans, sans-serif">R</text>
          </Svg>
        </TaskIcon>
        <TaskIcon bar="split">
          <Svg w={22} h={20}><path d="M.5 1h8l2 2h11v15H.5z" fill="#ffd45e" /><path d="M.5 1h8l1.500 2.500H.5z" fill="#d9a115" /><path d="M4.500 19v-8h14v8h-4v-4h-6v4z" fill="#3f94d9" /></Svg>
        </TaskIcon>
        <TaskIcon>
          <Svg w={24} h={24}><ellipse cx="11" cy="10.500" rx="10.500" ry="6.500" transform="rotate(-15 12 9)" fill="none" stroke="#e9a5a8" strokeWidth="1.200" /><ellipse cx="12" cy="8" rx="10.500" ry="6.200" transform="rotate(-15 12 9)" fill="#f1efef" stroke="#dd5a60" strokeWidth="1.500" /><path d="M17 3L13 14M6 8l11 6" stroke="#888e96" strokeWidth="1.300" /><circle cx="21" cy="15.500" r="2.300" stroke="#2c8dcb" strokeWidth="1.800" /><circle cx="16" cy="20.500" r="2.300" stroke="#2c8dcb" strokeWidth="1.800" /><path d="M13 13l6 2M14 13l2 5" stroke="#2c8dcb" strokeWidth="1.800" /></Svg>
        </TaskIcon>
        <TaskIcon>
          <Svg w={24} h={24}>
            <defs><linearGradient id="bag" x1="0" y1="0" x2="1" y2="1"><stop offset="0" stopColor="#0d6ab8" /><stop offset="1" stopColor="#20386c" /></linearGradient></defs>
            <path d="M6.500 6V3q0-1.500 1.500-1.500h8q1.500 0 1.500 1.500v3" stroke="#33b5ea" strokeWidth="2" />
            <path d="M.5 5h23v15q0 3-3 3h-17q-3 0-3-3z" fill="url(#bag)" />
            <path d="M7.500 9.500h4v4h-4z" fill="#f25022" /><path d="M12.500 9.500h4v4h-4z" fill="#7fba00" /><path d="M7.500 14.500h4v4h-4z" fill="#00a4ef" /><path d="M12.500 14.500h4v4h-4z" fill="#ffb900" />
          </Svg>
        </TaskIcon>
        <TaskIcon>
          <Svg w={24} h={24}><rect x=".5" y=".5" width="23" height="23" rx="7" fill="#4a8cff" /><rect x="5" y="8" width="10" height="8" rx="2" fill="#fff" /><path d="M15.500 10.500L19.500 8v8l-4-2.500z" fill="#fff" /></Svg>
        </TaskIcon>
        <TaskIcon bar="split">
          <Svg w={24} h={24}><path d="M1 1h22v22H1z" fill="#343434" /><path d="M12 12h11L12 23z" fill="#ffd800" /><path d="M23 12v11H12z" fill="#2b2b2b" /></Svg>
        </TaskIcon>
        <TaskIcon>
          <Svg w={24} h={24}><circle cx="12" cy="12" r="10.500" fill="#fff" stroke="#aaa49e" /><circle cx="12" cy="12" r="8.500" stroke="#cd4a1a" strokeWidth="2" /><circle cx="12" cy="12" r="5.200" fill="#d43a0b" /></Svg>
        </TaskIcon>
        <TaskIcon bar="full">
          <Svg w={24} h={24}>
            <defs><linearGradient id="npp" x1="0" y1="0" x2="0" y2="1"><stop offset="0" stopColor="#f4f8ee" /><stop offset=".4" stopColor="#b8e07c" /><stop offset="1" stopColor="#4dae1c" /></linearGradient></defs>
            <path d="M1.500 1.500h14l4 4v17h-18z" fill="#fff" stroke="#8b938b" /><path d="M3 7h15v14H3z" fill="url(#npp)" />
            <path d="M5.500 8v8M8.500 8v8M10 11h1M12 11h1" stroke="#333" strokeWidth="1.300" /><path d="M2 1.500h14" stroke="#555" strokeDasharray="1 1" />
            <path d="M21 1l2 1-8 15-2 1.500V16z" fill="#f0a92e" stroke="#b5761d" strokeWidth=".6" />
          </Svg>
        </TaskIcon>
        <TaskIcon bar="full">
          <Svg w={24} h={24}><circle cx="11.500" cy="12.500" r="11" fill="#6db33f" /><path d="M21 1q4 8 1.500 13l-6-9q3-1 4.500-4z" fill="#6db33f" /><path d="M20.500 6Q18 10 11 10q-6 1-6 7 9 3 13-2 3-4 2.500-9z" fill="#f0f8ee" /></Svg>
        </TaskIcon>
        <TaskIcon bar="full">
          <Svg w={24} h={24}><path d="M5 1.500h16.500v21H5z" fill="#fff4ee" stroke="#d8502c" /><path d="M.5 1.500h13v20h-13z" fill="#d8502c" /><text x="2" y="17.500" fontSize="16" fontWeight="700" fill="#fff" fontFamily="Open Sans, sans-serif">P</text><circle cx="16" cy="14" r="3.500" fill="#e98562" stroke="#fff" strokeWidth=".7" /><path d="M14 19.500h6" stroke="#d8502c" strokeWidth="1.400" /></Svg>
        </TaskIcon>
        <TaskIcon bar="full">
          <Svg w={24} h={24}><path d="M1 1h22v22H1z" fill="#1877d2" /><path d="M1 15l7-8 14 16H1z" fill="#0f3360" /><path d="M12 15l4-3 7 7v4H12z" fill="#173f70" /><circle cx="16" cy="6" r="2.200" fill="#fff" /></Svg>
        </TaskIcon>
        <TaskIcon bar="wide" className="bg-[#f1f6f8]"><Cone s={24} /></TaskIcon>
      </div>
      <Svg w={12} h={8} className="mt-[16px] ml-[63px]"><path d="M.8 7L6 1.500 11.200 7" stroke="#222" strokeWidth="1.300" /></Svg>
      <Svg w={16} h={16} className="mt-3 ml-[10px]"><path d="M0 0h16v16H0z" fill="#1464bf" /><path d="M8 3v10M3 8h10" stroke="#fff" strokeWidth="1.700" /></Svg>
      <Svg w={14} h={14} className="mt-[14px] ml-[11px]"><path d="M1 12Q1 1 12 1M4.500 12.500Q4.500 4.500 12.500 4.500M8 13Q8 8 13 8" stroke="#6e777d" strokeWidth="1.300" /><circle cx="11" cy="11.500" r="1.600" fill="#222" /></Svg>
      <div className="ml-[8px] flex w-[24px] flex-col items-center pt-[3px] text-[12px] leading-[17.5px]">
        <Fit w={23}>ENG</Fit><Fit w={14}>US</Fit>
      </div>
      <div className="ml-[12px] flex w-[60px] flex-col items-center pt-[3px] text-[12px] leading-[17.5px]">
        <Fit w={27}>16:06</Fit><Fit w={58}>04-07-2022</Fit>
      </div>
      <Svg w={26} h={26} className="mt-[11px] ml-[17px]"><path d="M0 1h16v12H6l-3 3v-3H0z" fill="#111" /><path d="M3 4.500h10M3 7h10M3 9.500h10" stroke="#d5e2e8" /><circle cx="15" cy="16.500" r="8" fill="#c6ccd0" stroke="#858b8f" /><text x="11.700" y="21" fontSize="12" fill="#222" fontFamily="Open Sans, sans-serif">5</text></Svg>
      <div className="ml-auto h-full w-[5px] border-l border-[#a9b6bd]" />
    </div>
  );
}

export default function App() {
  return (
    <div className="flex h-[768px] w-[1366px] flex-col overflow-hidden bg-white font-['Open_Sans','Noto_Sans',sans-serif]">
      <TitleBar />
      <MenuBar />
      <div className="flex h-[632px] bg-black pl-[121px]">
        <Word />
      </div>
      <Controls />
      <Taskbar />
    </div>
  );
}
